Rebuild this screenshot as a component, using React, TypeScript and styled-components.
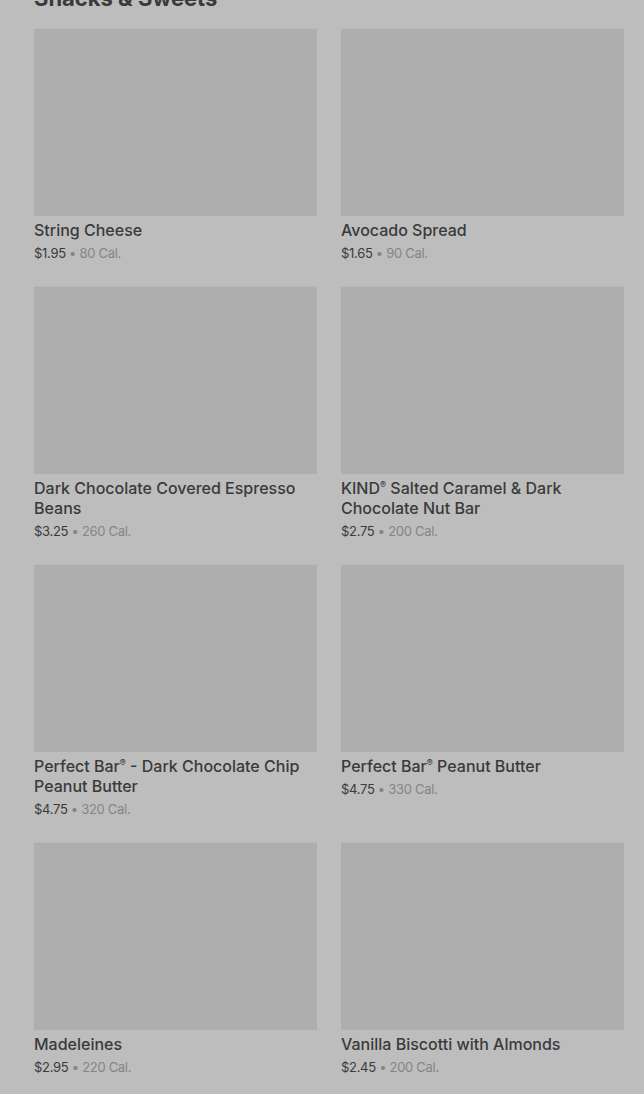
import styled, { createGlobalStyle } from "styled-components";

type Item = { name: string; price: string; cal: string };

const items: Item[] = [
  { name: "String Cheese", price: "$1.95", cal: "80 Cal." },
  { name: "Avocado Spread", price: "$1.65", cal: "90 Cal." },
  { name: "Dark Chocolate Covered Espresso Beans", price: "$3.25", cal: "260 Cal." },
  { name: "KIND® Salted Caramel & Dark Chocolate Nut Bar", price: "$2.75", cal: "200 Cal." },
  { name: "Perfect Bar® - Dark Chocolate Chip Peanut Butter", price: "$4.75", cal: "320 Cal." },
  { name: "Perfect Bar® Peanut Butter", price: "$4.75", cal: "330 Cal." },
  { name: "Madeleines", price: "$2.95", cal: "220 Cal." },
  { name: "Vanilla Biscotti with Almonds", price: "$2.45", cal: "200 Cal." },
];

// the ® mark is set as a small superscript
const renderName = (name: string) =>
  name.split("®").map((part, i, arr) => (
    <span key={i}>
      {part}
      {i < arr.length - 1 && <Reg>®</Reg>}
    </span>
  ));

const App = () => {
  return (
    <>
      <GlobalStyle />
      <Page>
        <Heading>Snacks &amp; Sweets</Heading>
        <Grid>
          {items.map((item) => (
            <Card key={item.name}>
              <Thumb />
              <Name>{renderName(item.name)}</Name>
              <Meta>
                <Price>{item.price}</Price>
                <Cal> • {item.cal}</Cal>
              </Meta>
            </Card>
          ))}
        </Grid>
      </Page>
    </>
  );
};

export default App;

const GlobalStyle = createGlobalStyle`
  html, body {
    margin: 0;
    padding: 0;
    background: #bdbdbd;
    font-family: Inter, "Liberation Sans", sans-serif;
    overflow: hidden;
  }
`;

const Page = styled.div`
  height: 1094px;
  padding: 0 20px 0 34px;
  background: #bdbdbd;
  overflow: hidden;
`;

const Heading = styled.h2`
  margin: -16px 0 16px;
  font-size: 22px;
  line-height: 28px;
  font-weight: 700;
  color: #3a3a3a;
`;

const Grid = styled.div`
  display: grid;
  grid-template-columns: 283px 283px;
  column-gap: 24px;
  row-gap: 24px;
`;

const Card = styled.div`
  display: flex;
  flex-direction: column;
`;

const Thumb = styled.div`
  height: 188px;
  background: #aeaeae;
  border-top: 1px solid #b8b8b8;
  box-sizing: border-box;
`;

const Name = styled.div`
  margin-top: 4px;
  font-size: 16px;
  line-height: 20px;
  font-weight: 500;
  color: #3a3a3a;
`;

const Reg = styled.span`
  font-size: 9px;
  line-height: 0;
  vertical-align: 6px;
`;

const Meta = styled.div`
  margin-top: 4px;
  font-size: 13px;
  line-height: 18px;
  letter-spacing: -0.3px;
`;

const Price = styled.span`
  color: #3a3a3a;
`;

const Cal = styled.span`
  color: #858585;
`;
